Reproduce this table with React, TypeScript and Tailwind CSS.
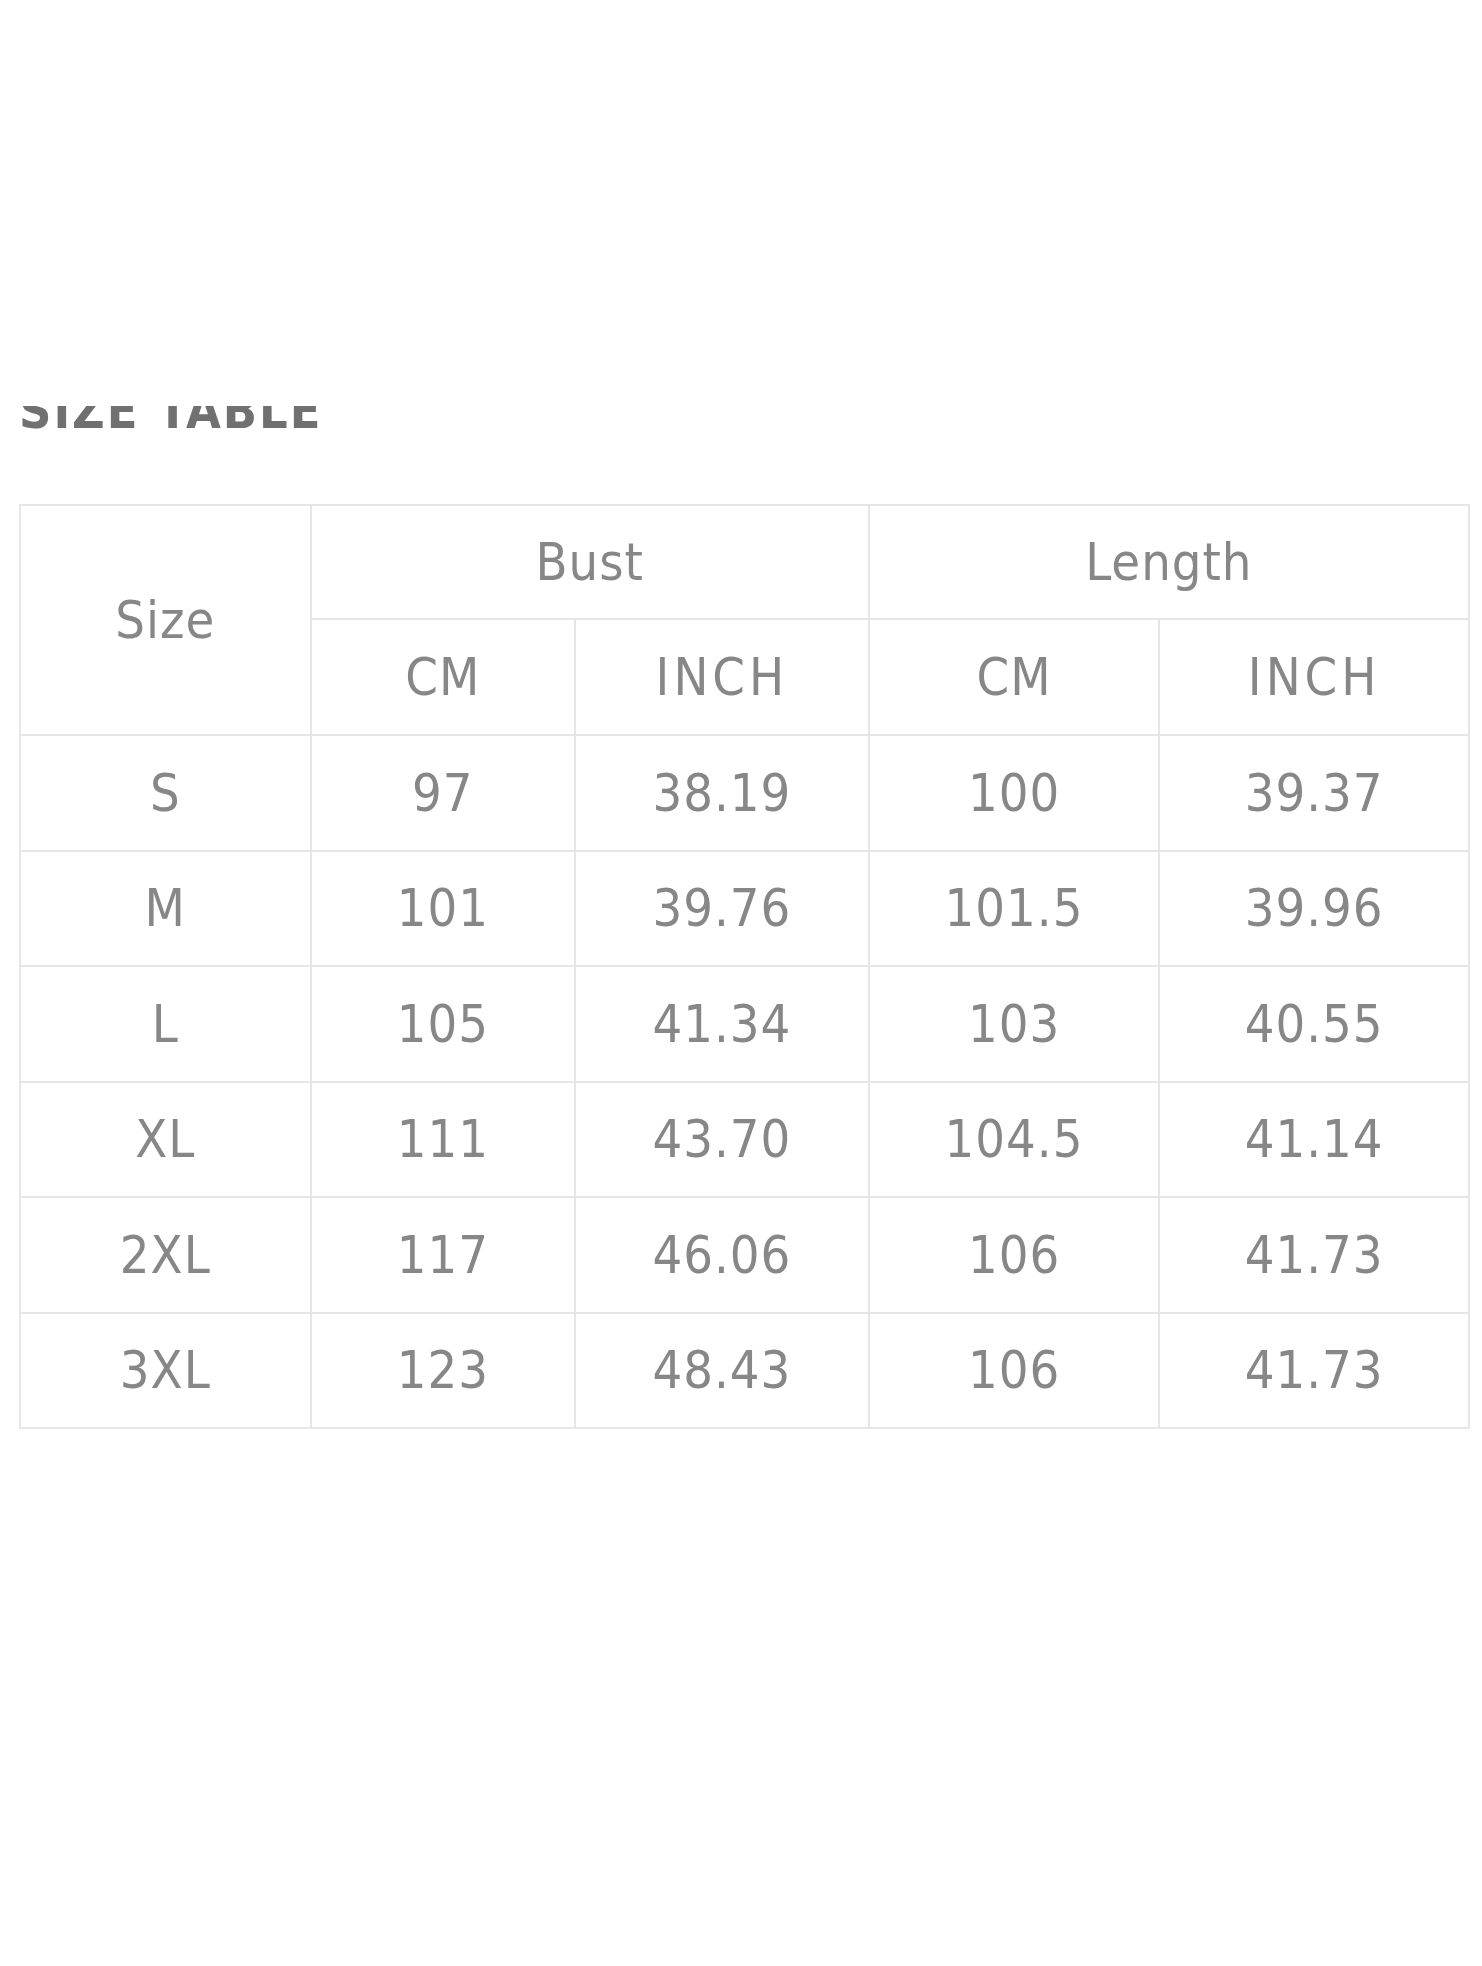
import React from 'react';

const rows = [
  ['S', '97', '38.19', '100', '39.37'],
  ['M', '101', '39.76', '101.5', '39.96'],
  ['L', '105', '41.34', '103', '40.55'],
  ['XL', '111', '43.70', '104.5', '41.14'],
  ['2XL', '117', '46.06', '106', '41.73'],
  ['3XL', '123', '48.43', '106', '41.73'],
];

const cell = 'border-2 border-[#e6e6e6] text-center align-middle font-normal';

export default function App() {
  return (
    <div
      className="w-[1482px] h-[1966px] bg-white text-[#878787]"
      style={{ fontFamily: '"DejaVu Sans Condensed", "DejaVu Sans", sans-serif', fontStretch: 'condensed' }}
    >
      <div className="pt-[406px] pl-[19px]">
        {/* title is cut off at the top in the source picture */}
        <div className="h-[24px] overflow-hidden">
          <div className="-mt-[20px] text-[50px] leading-[50px] font-bold tracking-[2px] text-[#707070]">
            SIZE TABLE
          </div>
        </div>
      </div>

      <div className="pt-[74px] pl-[19px]">
        <table className="w-[1451px] border-collapse border-2 border-[#e6e6e6] text-[52px] leading-none tracking-[1px]">
          <colgroup>
            <col className="w-[291px]" />
            <col className="w-[265px]" />
            <col className="w-[294px]" />
            <col className="w-[291px]" />
            <col className="w-[310px]" />
          </colgroup>
          <thead>
            <tr className="h-[114px]">
              <th rowSpan={2} className={cell}>Size</th>
              <th colSpan={2} className={cell}>Bust</th>
              <th colSpan={2} className={cell}>Length</th>
            </tr>
            <tr className="h-[116px]">
              <th className={cell}>CM</th>
              <th className={`${cell} tracking-[4px]`}>INCH</th>
              <th className={cell}>CM</th>
              <th className={`${cell} tracking-[4px]`}>INCH</th>
            </tr>
          </thead>
          <tbody>
            {rows.map((r) => (
              <tr key={r[0]} className="h-[115.5px]">
                {r.map((v, i) => (
                  <td key={i} className={cell}>{v}</td>
                ))}
              </tr>
            ))}
          </tbody>
        </table>
      </div>
    </div>
  );
}
